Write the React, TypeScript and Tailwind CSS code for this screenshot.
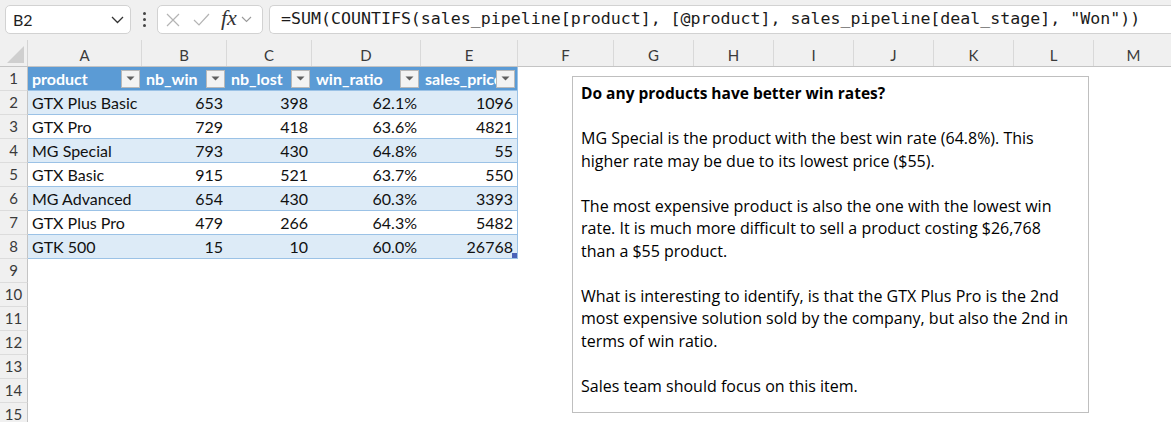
import React from "react";

const cols = [
  { l: "A", w: "w-[114px]" },
  { l: "B", w: "w-[85px]" },
  { l: "C", w: "w-[85px]" },
  { l: "D", w: "w-[109px]" },
  { l: "E", w: "w-[97px]" },
  { l: "F", w: "w-[96px]" },
  { l: "G", w: "w-[80px]" },
  { l: "H", w: "w-[80px]" },
  { l: "I", w: "w-[80px]" },
  { l: "J", w: "w-[80px]" },
  { l: "K", w: "w-[80px]" },
  { l: "L", w: "w-[80px]" },
  { l: "M", w: "w-[80px]" },
];

const headers = ["product", "nb_win", "nb_lost", "win_ratio", "sales_price"];

const data = [
  ["GTX Plus Basic", "653", "398", "62.1%", "1096"],
  ["GTX Pro", "729", "418", "63.6%", "4821"],
  ["MG Special", "793", "430", "64.8%", "55"],
  ["GTX Basic", "915", "521", "63.7%", "550"],
  ["MG Advanced", "654", "430", "60.3%", "3393"],
  ["GTX Plus Pro", "479", "266", "64.3%", "5482"],
  ["GTK 500", "15", "10", "60.0%", "26768"],
];

const cellFont = "font-['Lato','Open_Sans',sans-serif] text-[16px]";

function FilterBtn() {
  return (
    <div className="w-[19px] h-[18px] mr-[2px] shrink-0 bg-[#f3f3f3] border border-[#b9b9b9] flex items-center justify-center">
      <svg width="9" height="5" viewBox="0 0 9 5">
        <path d="M0.5 0.5 L8.5 0.5 L4.5 4.5 Z" fill="#5f5f5f" />
      </svg>
    </div>
  );
}

function RowHeader({ n }: { n: number }) {
  return (
    <div className="w-[28px] shrink-0 h-full box-border border-b border-r border-b-[#dcdcdc] border-r-[#c4c4c4] bg-[#f0f0f0] flex items-center justify-center text-[15px] text-[#3a3a3a] font-['Lato','Open_Sans',sans-serif]">
      {n}
    </div>
  );
}

export default function App() {
  return (
    <div className="relative w-[1171px] h-[422px] overflow-hidden bg-white">
      {/* Toolbar */}
      <div className="h-[40px] bg-[#f0f0f0] flex items-start pt-[5px] pl-[5px] gap-[6px]">
        <div className="w-[126px] h-[29px] bg-white border border-[#d2d2d2] rounded-[5px] flex items-center justify-between pl-[7px] pr-[6px] shrink-0">
          <span className="text-[16px] text-[#1f1f1f] font-['Lato','Open_Sans',sans-serif]">B2</span>
          <svg width="13" height="8" viewBox="0 0 13 8">
            <path d="M1 1 L6.5 6.5 L12 1" fill="none" stroke="#333" strokeWidth="1.3" />
          </svg>
        </div>
        <div className="w-[14px] h-[29px] flex flex-col items-center justify-center gap-[3px] shrink-0">
          <div className="w-[3px] h-[3px] rounded-full bg-[#444]" />
          <div className="w-[3px] h-[3px] rounded-full bg-[#444]" />
          <div className="w-[3px] h-[3px] rounded-full bg-[#444]" />
        </div>
        <div className="w-[106px] h-[29px] bg-white border border-[#d2d2d2] rounded-[5px] flex items-center shrink-0 pl-[8px]">
          <svg width="14" height="14" viewBox="0 0 14 14" className="mr-[13px]">
            <path d="M1 1 L13 13 M13 1 L1 13" stroke="#b4b4b4" strokeWidth="1.2" fill="none" />
          </svg>
          <svg width="17" height="13" viewBox="0 0 17 13" className="mr-[11px]">
            <path d="M1 7 L6 12 L16 1" stroke="#b4b4b4" strokeWidth="1.2" fill="none" />
          </svg>
          <span className="italic text-[22px] leading-none text-[#333] font-['Liberation_Serif',serif] mr-[4px] -mt-[3px]">fx</span>
          <svg width="11" height="7" viewBox="0 0 11 7">
            <path d="M1 1 L5.5 5.5 L10 1" fill="none" stroke="#9a9a9a" strokeWidth="1.1" />
          </svg>
        </div>
        <div className="flex-1 h-[29px] bg-white border border-[#d2d2d2] border-r-0 rounded-l-[5px] flex items-center pl-[11px] whitespace-nowrap overflow-hidden">
          <span className="text-[16.6px] text-[#1a1a1a] font-['DejaVu_Sans_Mono','Liberation_Mono',monospace]">
            =SUM(COUNTIFS(sales_pipeline[product], [@product], sales_pipeline[deal_stage], "Won"))
          </span>
        </div>
      </div>

      {/* Column headers */}
      <div className="flex h-[27px] bg-[#f0f0f0] border-b border-[#c4c4c4] box-border">
        <div className="w-[28px] shrink-0 h-full relative border-r border-[#d4d4d4] box-border">
          <svg width="17" height="17" viewBox="0 0 17 17" className="absolute right-[3px] bottom-[3px]">
            <path d="M17 0 L17 17 L0 17 Z" fill="#cfcfcf" />
          </svg>
        </div>
        {cols.map((c) => (
          <div
            key={c.l}
            className={`${c.w} shrink-0 h-full box-border border-r border-[#d9d9d9] flex items-center justify-center pt-[4px] text-[15px] text-[#3a3a3a] font-['Lato','Open_Sans',sans-serif]`}
          >
            {c.l}
          </div>
        ))}
      </div>

      {/* Row 1: table header */}
      <div className="flex h-[24px]">
        <RowHeader n={1} />
        {cols.slice(0, 5).map((c, i) => (
          <div
            key={c.l}
            className={`${c.w} shrink-0 h-full box-border bg-[#5b9bd5] border-b border-[#9bc2e6] ${i === 4 ? "border-r" : ""} flex items-center pl-[4px] overflow-hidden`}
          >
            <span className={`flex-1 min-w-0 overflow-hidden whitespace-nowrap font-bold text-white ${cellFont}`}>{headers[i]}</span>
            <FilterBtn />
          </div>
        ))}
      </div>

      {/* Data rows */}
      {data.map((r, ri) => {
        const blue = ri % 2 === 0;
        return (
          <div key={ri} className="flex h-[24px]">
            <RowHeader n={ri + 2} />
            {r.map((v, ci) => (
              <div
                key={ci}
                className={`${cols[ci].w} shrink-0 h-full box-border relative ${blue ? "bg-[#ddebf7]" : "bg-white"} border-b border-[#9bc2e6] ${ci === 4 ? "border-r" : ""} flex items-center ${ci === 0 ? "justify-start pl-[4px]" : "justify-end pr-[4px]"} text-[#111] ${cellFont} whitespace-nowrap`}
              >
                {v}
                {ri === 6 && ci === 4 && (
                  <div className="absolute right-0 bottom-0 w-[5px] h-[5px] bg-[#4a62b8]" />
                )}
              </div>
            ))}
          </div>
        );
      })}

      {/* Empty rows */}
      {[9, 10, 11, 12, 13, 14, 15].map((n) => (
        <div key={n} className="flex h-[24px]">
          <RowHeader n={n} />
        </div>
      ))}

      {/* Text box */}
      <div className="absolute left-[572px] top-[76px] w-[517px] h-[337px] bg-white border border-[#bfbfbf] pl-[8px] pt-[5px] text-[16px] leading-[22.5px] text-black font-['Open_Sans','Lato',sans-serif] whitespace-nowrap">
        <div className="font-bold text-[15.5px]">Do any products have better win rates?</div>
        <div>&nbsp;</div>
        <div>MG Special is the product with the best win rate (64.8%). This</div>
        <div>higher rate may be due to its lowest price ($55).</div>
        <div>&nbsp;</div>
        <div>The most expensive product is also the one with the lowest win</div>
        <div>rate. It is much more difficult to sell a product costing $26,768</div>
        <div>than a $55 product.</div>
        <div>&nbsp;</div>
        <div>What is interesting to identify, is that the GTX Plus Pro is the 2nd</div>
        <div>most expensive solution sold by the company, but also the 2nd in</div>
        <div>terms of win ratio.</div>
        <div>&nbsp;</div>
        <div>Sales team should focus on this item.</div>
      </div>
    </div>
  );
}
